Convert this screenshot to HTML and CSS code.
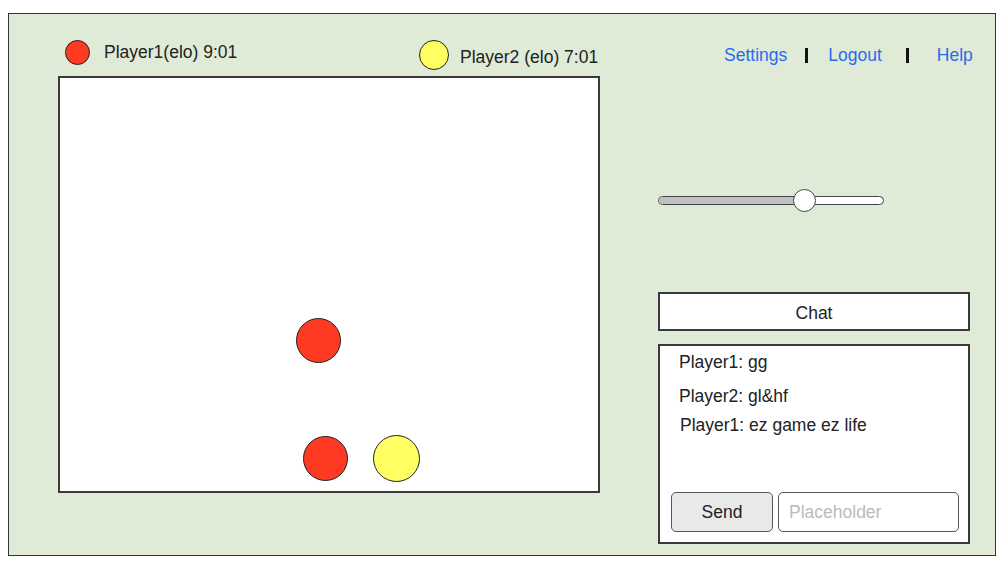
FILE: index.html
```html
<!DOCTYPE html>
<html>
<head>
<meta charset="utf-8">
<link rel="stylesheet" href="styles.css">
</head>
<body>
<div class="frame">
  <div class="left">
    <div class="players">
      <div class="player p1"><span class="dot red small"></span><span>Player1(elo) 9:01</span></div>
      <div class="player p2"><span class="dot yellow big"></span><span class="p2-text">Player2 (elo) 7:01</span></div>
    </div>
    <div class="board">
      <span class="piece red pc1"></span>
      <span class="piece red pc2"></span>
      <span class="piece yellow pc3"></span>
    </div>
  </div>
  <div class="right">
    <nav class="nav">
      <a class="link l-settings">Settings</a>
      <span class="sep s1"></span>
      <a class="link l-logout">Logout</a>
      <span class="sep s2"></span>
      <a class="link l-help">Help</a>
    </nav>
    <div class="slider">
      <div class="track"><div class="fill"></div></div>
      <div class="thumb"></div>
    </div>
    <div class="chat-title">Chat</div>
    <div class="chat-body">
      <div class="msg m1">Player1: gg</div>
      <div class="msg m2">Player2: gl&amp;hf</div>
      <div class="msg m3">Player1: ez game ez life</div>
      <div class="chat-input">
        <button class="send">Send</button>
        <input class="text" type="text" placeholder="Placeholder">
      </div>
    </div>
  </div>
</div>
</body>
</html>
```

FILE: styles.css
```css
* { box-sizing: border-box; }
body {
  margin: 0;
  font-family: "Liberation Sans", Arial, sans-serif;
  font-size: 17.5px;
  color: #222;
  background: #fff;
}
.frame {
  margin: 13px 0 0 8px;
  width: 988px;
  height: 543px;
  border: 1px solid #333;
  background: #dfebd6;
  display: flex;
}
.left {
  padding-left: 49px;
  width: 591px;
  flex-shrink: 0;
}
.players {
  height: 62px;
  display: flex;
  align-items: flex-start;
}
.player {
  display: flex;
  align-items: center;
  margin-top: 26px;
  flex-shrink: 0;
}
.p1 {
  margin-left: 7px;
  width: 354px;
  gap: 14px;
}
.p2 { gap: 11px; }
.p2-text { padding-top: 5px; }
.dot {
  display: inline-block;
  border-radius: 50%;
  border: 1px solid #222;
  flex-shrink: 0;
}
.dot.small { width: 25px; height: 25px; }
.dot.big { width: 30px; height: 30px; }
.red { background: #ff3a22; }
.yellow { background: #ffff62; }
.board {
  position: relative;
  width: 542px;
  height: 417px;
  background: #fff;
  border: 2px solid #3a3a3a;
}
.piece {
  position: absolute;
  border-radius: 50%;
  border: 1px solid #222;
}
.pc1 { left: 236px; top: 240px; width: 45px; height: 45px; }
.pc2 { left: 243px; top: 358px; width: 45px; height: 45px; }
.pc3 { left: 313px; top: 357px; width: 47px; height: 47px; }

.right {
  margin-left: 58px;
  width: 312px;
  display: flex;
  flex-direction: column;
}
.nav {
  margin-top: 29px;
  height: 24px;
  padding-left: 66px;
  display: flex;
  align-items: center;
  white-space: nowrap;
}
.nav > * { flex-shrink: 0; }
.link { color: #2a6af0; text-decoration: none; }
.sep {
  display: inline-block;
  width: 3px;
  height: 15px;
  background: #111;
}
.s1 { margin-left: 18px; }
.l-logout { margin-left: 20px; }
.s2 { margin-left: 24px; }
.l-help { margin-left: 28px; }

.slider {
  position: relative;
  margin-top: 122px;
  height: 23px;
  width: 226px;
  display: flex;
  align-items: center;
}
.track {
  width: 226px;
  height: 9px;
  border: 1px solid #444;
  border-radius: 5px;
  background: #fff;
  overflow: hidden;
}
.fill {
  width: 147px;
  height: 100%;
  background: #c0c0c0;
}
.thumb {
  position: absolute;
  left: 135px;
  top: 0;
  width: 23px;
  height: 23px;
  border-radius: 50%;
  border: 1px solid #444;
  background: #fff;
}
.chat-title {
  margin-top: 80px;
  height: 39px;
  border: 2px solid #3a3a3a;
  background: #fff;
  display: flex;
  align-items: center;
  justify-content: center;
  padding-top: 3px;
}
.chat-body {
  margin-top: 13px;
  height: 200px;
  border: 2px solid #3a3a3a;
  background: #fff;
  display: flex;
  flex-direction: column;
  padding: 5px 9px 10px 11px;
}
.msg { line-height: 22px; padding-left: 8px; }
.m2 { margin-top: 12px; }
.m3 { margin-top: 7px; padding-left: 9px; }
.chat-input {
  margin-top: auto;
  display: flex;
  gap: 5px;
}
.send {
  width: 103px;
  height: 40px;
  border: 1px solid #555;
  border-radius: 5px;
  background: #e9e9e9;
  font-family: inherit;
  font-size: 17.5px;
  color: #222;
}
.text {
  width: 181px;
  height: 40px;
  border: 1px solid #555;
  border-radius: 5px;
  background: #fff;
  padding: 0 10px;
  font-family: inherit;
  font-size: 17.5px;
}
.text::placeholder { color: #bbb; }
```
